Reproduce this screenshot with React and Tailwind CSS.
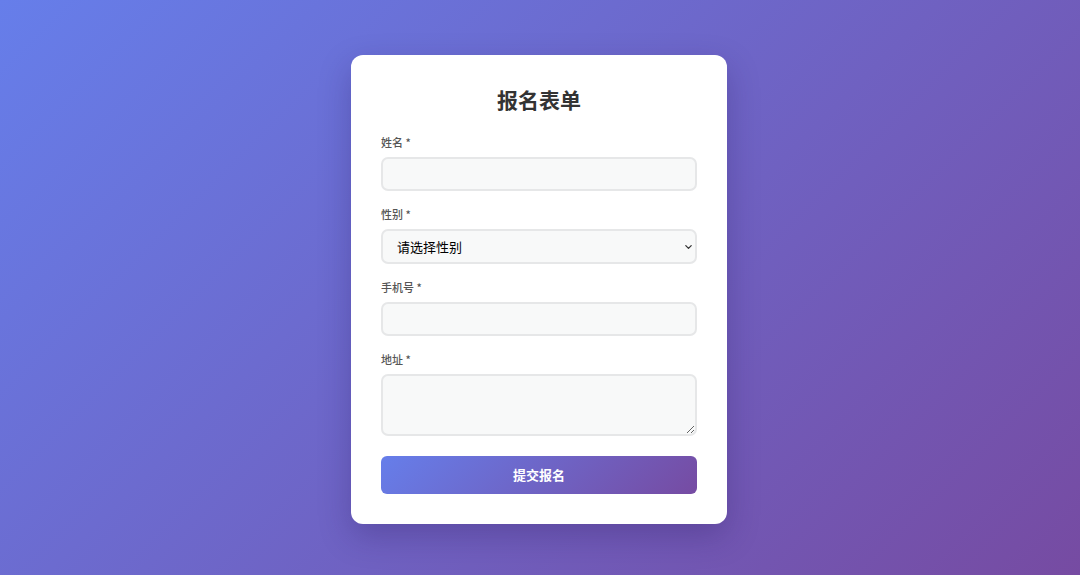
import { useState } from "react";

const font = { fontFamily: '"Noto Sans CJK SC", "Noto Sans", sans-serif' };

function Label({ children }) {
  return (
    <label className="block text-[11px] leading-[18px] mb-[6px] text-[#555] font-medium">
      {children} *
    </label>
  );
}

export default function App() {
  const [form, setForm] = useState({ name: "", gender: "", phone: "", address: "" });
  const update = (key) => (e) => setForm({ ...form, [key]: e.target.value });

  const fieldClass =
    "block w-full rounded-[7px] border-2 border-[#e6e7e8] bg-[#f8f9f9] px-[12px] text-[13px] text-[#333] outline-none";

  return (
    <div
      className="min-h-screen w-full bg-[linear-gradient(135deg,#667eea_0%,#764ba2_100%)] flex justify-center pt-[55px] pb-[51px]"
      style={font}
    >
      <div className="w-[376px] h-[469px] mr-[2px] bg-white rounded-[12px] shadow-[0_12px_32px_rgba(40,20,90,0.28)] px-[30px] pt-[30px]">
        <h1 className="text-center text-[21px] leading-[28px] font-bold text-[#333] mb-[20px]">报名表单</h1>

        {/* 姓名 */}
        <div className="mb-[14px]">
          <Label>姓名</Label>
          <input type="text" value={form.name} onChange={update("name")} className={`${fieldClass} h-[34px]`} />
        </div>

        {/* 性别 */}
        <div className="mb-[14px]">
          <Label>性别</Label>
          <div className="relative">
            <select
              value={form.gender}
              onChange={update("gender")}
              className={`${fieldClass} h-[35px] appearance-none pl-[14px] text-[12.5px] text-black`}
            >
              <option value="">请选择性别</option>
              <option value="male">男</option>
              <option value="female">女</option>
            </select>
            <svg
              className="absolute right-[4px] top-1/2 -translate-y-1/2 pointer-events-none"
              width="9"
              height="9"
              viewBox="0 0 10 10"
              fill="none"
              stroke="#333"
              strokeWidth="1.4"
              strokeLinecap="round"
              strokeLinejoin="round"
            >
              <path d="M2 3.5 L5 6.5 L8 3.5" />
            </svg>
          </div>
        </div>

        {/* 手机号 */}
        <div className="mb-[14px]">
          <Label>手机号</Label>
          <input type="tel" value={form.phone} onChange={update("phone")} className={`${fieldClass} h-[34px]`} />
        </div>

        {/* 地址 */}
        <div className="mb-[20px]">
          <Label>地址</Label>
          <textarea
            value={form.address}
            onChange={update("address")}
            className={`${fieldClass} h-[62px] py-[8px] resize-y`}
          />
        </div>

        <button
          type="button"
          className="w-full h-[38px] rounded-[6px] bg-[linear-gradient(135deg,#667eea_0%,#764ba2_100%)] text-white text-[13px] leading-[36px] font-bold"
        >
          提交报名
        </button>
      </div>
    </div>
  );
}
